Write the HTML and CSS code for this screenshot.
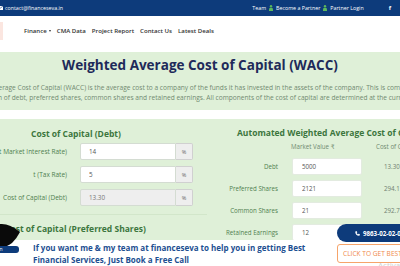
FILE: index.html
```html
<!DOCTYPE html>
<html lang="en">
<head>
<meta charset="utf-8">
<title>Weighted Average Cost of Capital (WACC)</title>
<link rel="stylesheet" href="styles.css">
</head>
<body>
<div class="topbar">
  <div class="contact">
    <svg class="env" width="5" height="4" viewBox="0 0 5 4"><rect x="0" y="0" width="5" height="4" fill="#fff"/><path d="M0 0 L2.5 2 L5 0" stroke="#0d3b7b" stroke-width="0.6" fill="none"/></svg>
    <span>contact@financeseva.in</span>
  </div>
  <div class="toplinks">
    <span>Team</span>
    <svg class="usr" width="4" height="6" viewBox="0 0 4 6"><circle cx="2" cy="1.3" r="1.2" fill="#5cb85c"/><path d="M0 6 L0 4.2 Q0 2.8 2 2.8 Q4 2.8 4 4.2 L4 6 Z" fill="#5cb85c"/></svg>
    <span>Become a Partner</span>
    <svg class="usr" width="4" height="6" viewBox="0 0 4 6"><circle cx="2" cy="1.3" r="1.2" fill="#5cb85c"/><path d="M0 6 L0 4.2 Q0 2.8 2 2.8 Q4 2.8 4 4.2 L4 6 Z" fill="#5cb85c"/></svg>
    <span>Partner Login</span>
    <span class="fb">f</span>
    <span class="sq"></span>
  </div>
</div>

<nav class="nav">
  <div class="logo"></div>
  <ul class="menu">
    <li>Finance <span class="caret"></span></li>
    <li>CMA Data</li>
    <li>Project Report</li>
    <li>Contact Us</li>
    <li>Latest Deals</li>
  </ul>
</nav>

<section class="hero">
  <h1>Weighted Average Cost of Capital (WACC)</h1>
  <p class="intro">
    <span class="l1">The Weighted Average Cost of Capital (WACC) is the average cost to a company of the funds it has invested in the assets of the company. This is composed of a combinatio</span>
    <span class="l2">n of debt, preferred shares, common shares and retained earnings. All components of the cost of capital are determined at the current market value.</span>
  </p>
</section>

<section class="calc">
  <div class="col-left">
    <h3 class="ghead">Cost of Capital (Debt)</h3>
    <div class="lrow">
      <div class="lbl"><span>Kd (Current Market Interest Rate)</span></div>
      <div class="field"><input class="inp" value="14"><span class="addon">%</span></div>
    </div>
    <div class="lrow">
      <div class="lbl"><span>t (Tax Rate)</span></div>
      <div class="field"><input class="inp" value="5"><span class="addon">%</span></div>
    </div>
    <div class="lrow">
      <div class="lbl"><span>Cost of Capital (Debt)</span></div>
      <div class="field"><input class="inp dis" value="13.30" disabled><span class="addon">%</span></div>
    </div>
    <div class="sep"></div>
    <h3 class="ghead ghead2">Cost of Capital (Preferred Shares)</h3>
  </div>

  <div class="col-right">
    <h3 class="ghead rhead">Automated Weighted Average Cost of Capital</h3>
    <div class="thead"><span class="th1">Market Value ₹</span><span>Cost of Capital</span></div>
    <div class="rrow"><div class="rlbl">Debt</div><input class="rinp" value="5000"><span class="cost">13.30</span></div>
    <div class="rrow"><div class="rlbl">Preferred Shares</div><input class="rinp" value="2121"><span class="cost">294.11</span></div>
    <div class="rrow"><div class="rlbl">Common Shares</div><input class="rinp" value="21"><span class="cost">292.71</span></div>
    <div class="rrow"><div class="rlbl">Retained Earnings</div><input class="rinp" value="12"><span class="cost">290.10</span></div>
  </div>
</section>

<div class="promo">
  <p class="promo-text">If you want me &amp; my team at financeseva to help you in getting Best<br>Financial Services, Just Book a Free Call</p>
</div>

<svg class="avatar" width="22" height="28" viewBox="0 0 22 28"><path d="M0 2 Q9 1 20 10 Q17 16 12 21 Q7 25 0 26 Z" fill="#0a0a0a"/></svg>
<div class="login-btn">Login</div>

<a class="phone">
  <svg width="5" height="5" viewBox="0 0 10 10"><path d="M2 0.5 L3.8 0.5 L4.5 3 L3.2 4 Q4.2 6 6 6.8 L7 5.5 L9.5 6.2 L9.5 8 Q9.5 9.5 8 9.5 Q1 9 0.5 2 Q0.5 0.5 2 0.5 Z" fill="#fff"/></svg>
  <span>9863-02-02-02</span>
</a>
<a class="cta">CLICK TO GET BEST FINANCE</a>
<div class="watermark">Activate Windows</div>
</body>
</html>
```

FILE: styles.css
```css
* { box-sizing: border-box; margin: 0; padding: 0; }
html, body { width: 400px; height: 266px; overflow: hidden; }
body { font-family: "Open Sans", "DejaVu Sans", sans-serif; background: #fff; position: relative; color: #333; }

.topbar { height: 16px; background: #0d3b7b; color: #fff; display: flex; align-items: center; font-size: 5.3px; }
.contact { display: flex; align-items: center; gap: 2px; margin-left: -2px; }
.env { display: block; }
.toplinks { display: flex; align-items: center; margin-left: auto; gap: 3px; margin-right: -5px; }
.usr { display: block; }
.fb { margin-left: 22px; font-weight: 700; font-size: 6px; }
.sq { width: 5px; height: 5px; background: #fff; margin-left: 6px; border-radius: 1px; }

.nav { height: 29px; display: flex; align-items: center; background: #fff; }
.logo { width: 4px; height: 18px; background: #fbe6e0; margin-left: -1px; }
.menu { list-style: none; display: flex; gap: 6px; margin-left: 21px; font-size: 6.1px; font-weight: 600; color: #333; }
.menu li { display: flex; align-items: center; gap: 2px; white-space: nowrap; }
.caret { width: 0; height: 0; border-left: 1.5px solid transparent; border-right: 1.5px solid transparent; border-top: 2px solid #333; }

.hero { margin-top: 7px; height: 58px; background: #dff0d8; padding-top: 4px; overflow: hidden; }
.hero h1 { font-size: 13.5px; font-weight: 700; color: #1e2a5a; text-align: center; line-height: 19px; white-space: nowrap; }
.intro { margin-top: 8px; font-size: 6.6px; line-height: 9.5px; color: #718a71; white-space: nowrap; }
.intro span { display: block; }
.l1 { margin-left: -53px; }
.l2 { margin-left: -2px; }

.calc { margin-top: 9px; height: 160px; background: #dff0d8; display: flex; }
.col-left { width: 207px; flex: none; padding-top: 9px; }
.ghead { font-size: 8.5px; line-height: 12px; font-weight: 700; color: #3c763d; white-space: nowrap; padding-left: 31px; }
.lrow { display: flex; align-items: center; height: 17px; margin-top: 6px; }
.lrow:first-of-type { margin-top: 3px; }
.lbl { width: 67px; flex: none; display: flex; justify-content: flex-end; white-space: nowrap; font-size: 6.5px; color: #4f7f4f; }
.field { margin-left: 13px; display: flex; width: 113px; height: 17px; }
.inp { flex: 1; min-width: 0; height: 17px; border: 1px solid #d4dcd2; border-radius: 2px 0 0 2px; background: #fff; font-family: inherit; font-size: 6.3px; color: #555; padding-left: 8px; outline: none; }
.inp.dis { background: #eeeeee; color: #777; }
.addon { width: 17px; height: 17px; background: #eeeeee; border: 1px solid #d0d0d0; border-left: 0; border-radius: 0 2px 2px 0; font-size: 5.5px; color: #666; display: flex; align-items: center; justify-content: center; }
.sep { height: 1px; background: #d2e6ca; margin-top: 8px; }
.ghead2 { margin-top: 8px; padding-left: 5px; }

.col-right { flex: none; width: 220px; padding-top: 8px; }
.rhead { padding-left: 30px; }
.thead { display: flex; font-size: 6.2px; line-height: 10px; margin-top: 3px; padding-left: 84px; color: #6f8a6f; white-space: nowrap; }
.th1 { width: 85px; flex: none; }
.rrow { display: flex; align-items: center; height: 17px; margin-top: 5px; }
.thead + .rrow { margin-top: 6px; }
.rlbl { width: 71px; flex: none; text-align: right; font-size: 6.2px; color: #4f7f4f; white-space: nowrap; }
.rinp { margin-left: 14px; width: 70px; height: 17px; flex: none; border: 1px solid #e3ebe0; border-radius: 2px; background: #fff; font-family: inherit; font-size: 6.2px; color: #555; padding-left: 9px; outline: none; }
.cost { margin-left: 22px; font-size: 6.2px; color: #6f7f6f; white-space: nowrap; }

.promo { position: absolute; left: 0; top: 240px; width: 400px; height: 26px; background: #fff; }
.promo-text { padding: 2px 0 0 33px; font-size: 8px; line-height: 12px; font-weight: 700; color: #1d4f91; white-space: nowrap; }

.avatar { position: absolute; left: 0; top: 222px; }
.login-btn { position: absolute; left: -22px; top: 246px; width: 41px; height: 7px; background: #0d3b7b; border-radius: 3px; color: #fff; font-size: 5px; line-height: 7px; padding-left: 12px; }

.phone { position: absolute; left: 337px; top: 224px; width: 80px; height: 18px; border-radius: 9px; background: #0d3b7b; color: #fff; display: flex; align-items: center; gap: 3px; padding-left: 18px; font-size: 6.2px; font-weight: 700; white-space: nowrap; }
.phone svg { display: block; }
.cta { position: absolute; left: 337px; top: 244px; width: 90px; height: 19px; border: 1px solid #f6a46a; border-radius: 3px; background: #fff; color: #f08a4b; font-size: 6.6px; line-height: 17px; padding-left: 5px; white-space: nowrap; }
.watermark { position: absolute; left: 378px; top: 259px; font-size: 8px; color: #d0d0d0; white-space: nowrap; }
```
